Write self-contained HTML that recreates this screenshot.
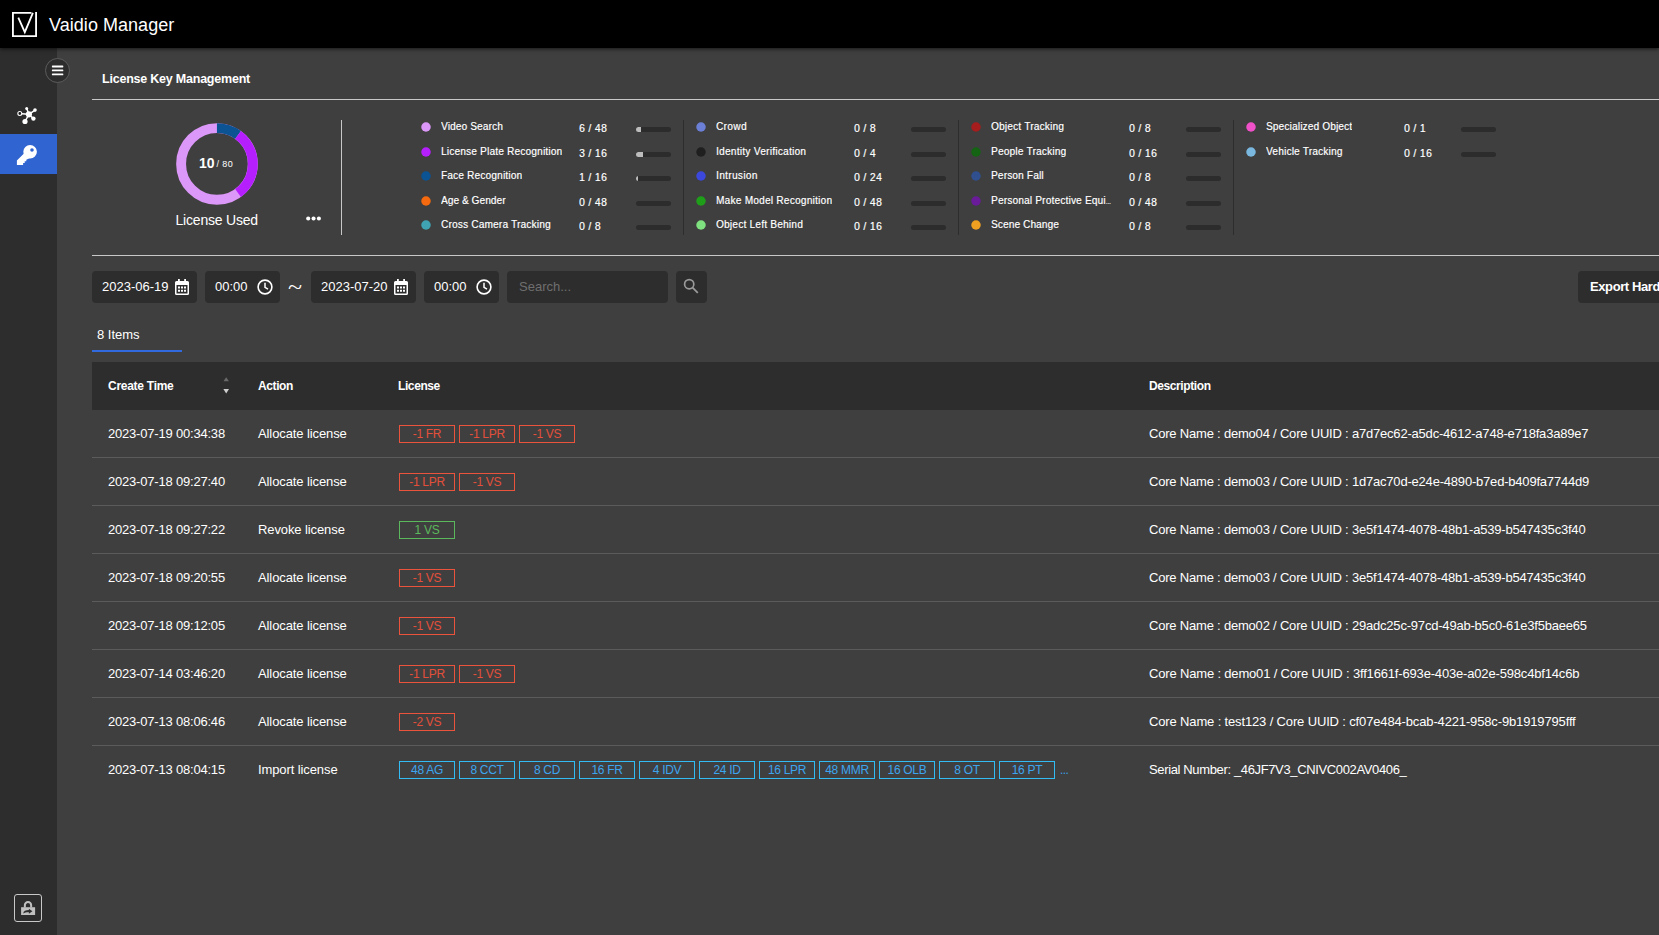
<!DOCTYPE html>
<html lang="en">
<head>
<meta charset="utf-8">
<title>Vaidio Manager</title>
<style>
*{box-sizing:border-box;margin:0;padding:0}
html,body{width:1659px;height:935px;overflow:hidden;background:#3f3f3f;color:#fff;font-family:"Liberation Sans",sans-serif;}
body{position:relative}
.abs{position:absolute}
#topbar{position:absolute;left:0;top:0;width:1659px;height:48px;background:#000;z-index:5;box-shadow:0 1px 4px rgba(0,0,0,.65)}
#logo{position:absolute;left:12px;top:12px;width:25px;height:25px}
#title{position:absolute;left:49px;top:14px;font-size:18px;line-height:22px;white-space:nowrap;letter-spacing:0.04px}
#sidebar{position:absolute;left:0;top:48px;width:57px;height:887px;background:#2d2d2d}
#burger{position:absolute;left:45px;top:58px;width:25px;height:25px;border-radius:50%;background:#2d2d2d;border:1px solid #5c5c5c;z-index:6}
#burger i{position:absolute;left:6px;width:11px;height:2px;background:#fff;border-radius:1px}
#nav-active{position:absolute;left:0;top:134px;width:57px;height:40px;background:#3064d0}
#lockbtn{position:absolute;left:14px;top:894px;width:28px;height:28px;border:1px solid #c8c8c8;border-radius:3px}
h1{position:absolute;left:102px;top:71px;font-size:12.5px;line-height:16px;font-weight:bold;white-space:nowrap;letter-spacing:-0.22px}
.hr{position:absolute;left:92px;width:1567px;height:1px;background:#c8c8c8}
.vr{position:absolute;width:1px;top:120px;height:115px;background:#8a8a8a}
#used{position:absolute;left:175.500px;top:211px;font-size:14px;line-height:18px;white-space:nowrap;letter-spacing:-0.2px}
.lg{position:absolute;width:275px;height:24px;white-space:nowrap}
.lg .d{position:absolute;left:-5px;top:7px;width:10px;height:10px;border-radius:50%;transform:scale(.95)}
.lg .n{position:absolute;left:15px;top:5px;font-size:10px;line-height:13px;letter-spacing:0.17px;max-width:123px;overflow:hidden;text-overflow:ellipsis;text-shadow:0.5px 0 0 rgba(255,255,255,.45)}
.lg .c{position:absolute;left:153px;top:7px;font-size:10.4px;line-height:13px;letter-spacing:0.35px;text-shadow:0.5px 0 0 rgba(255,255,255,.45)}
.lg .b{position:absolute;left:210px;top:12px;width:35px;height:5px;border-radius:2.5px;background:#2c2c2c;overflow:hidden}
.lg .b u{display:block;height:5px;background:#bdbdbd}
.inp{position:absolute;top:271px;height:32px;background:#2d2d2d;border-radius:4px;font-size:13px;line-height:32px;padding-left:10px;white-space:nowrap}
.inp svg{position:absolute}
#export{position:absolute;left:1578px;top:271px;width:100px;height:32px;background:#2d2d2d;border-radius:4px;font-size:13px;font-weight:bold;line-height:32px;padding-left:12px;white-space:nowrap;letter-spacing:-0.4px}
#items{position:absolute;left:97px;top:327px;font-size:13px;line-height:16px}
#tabline{position:absolute;left:92px;top:350px;width:90px;height:2px;background:#3169de}
table{position:absolute;left:92px;top:362px;width:1567px;border-collapse:separate;border-spacing:0;table-layout:fixed;font-size:13px;letter-spacing:-0.2px}
th:first-child{letter-spacing:-0.27px}
th{position:relative;height:48px;background:#2d2d2d;text-align:left;font-size:12px;font-weight:bold;padding-left:16px;white-space:nowrap;letter-spacing:-0.4px}
td{height:48px;padding-left:16px;white-space:nowrap;border-bottom:1px solid #5b5b5b;vertical-align:middle;overflow:hidden}
tr.last td{border-bottom-color:transparent}
td:nth-child(2){letter-spacing:-0.1px}
.t{display:inline-block;width:56px;height:18px;border:1px solid;font-size:12px;line-height:16px;text-align:center;margin-right:4px;vertical-align:middle;letter-spacing:-0.3px}
td.tags{padding-left:17px;font-size:0}
.more{font-size:12px;color:#3a9fe6;vertical-align:middle;letter-spacing:-0.6px;margin-left:1px}
.r{color:#e34f3b;border-color:#ec533d}
.g{color:#5cb85c;border-color:#5cb85c}
.bl{color:#3da5ee;border-color:#33bbf3}
</style>
</head>
<body>
<div id="topbar">
  <svg id="logo" viewBox="0 0 25 25" fill="none" stroke="#fff"><path d="M19.500 0.900H0.900V24.100H24.100V0" stroke-width="1.900"/><path d="M6.300 5.600L12.800 20.200L20.900 0.800" stroke-width="1.800"/></svg>
  <div id="title">Vaidio Manager</div>
</div>
<div id="sidebar"></div>
<div id="burger"><svg class="abs" style="left:-1px;top:-1px" width="25" height="25" viewBox="45 58 25 25" fill="#fff"><rect x="51.900" y="65.500" width="11.400" height="1.900" rx="0.600"/><rect x="51.900" y="69.450" width="11.400" height="1.900" rx="0.600"/><rect x="51.900" y="73.400" width="11.400" height="1.900" rx="0.600"/></svg></div>
<div id="nav-active"></div>
<svg class="abs" style="left:0;top:100px" width="57" height="74" viewBox="0 100 57 74" fill="#fff" stroke="#fff">
<g stroke-width="1.5" fill="none"><path d="M28.9 114.3L21.8 113.7M28.9 114.3L26.7 108.4M28.9 114.3L35 110.1M28.9 114.3L33.4 118.6M28.9 114.3L25 121.5"/></g>
<g stroke="none"><circle cx="28.9" cy="114.3" r="3.1"/><circle cx="26.7" cy="108.4" r="1.5"/><circle cx="35" cy="110.1" r="1.8"/><circle cx="33.4" cy="118.6" r="2.2"/><circle cx="25" cy="121.5" r="2.6"/></g>
<circle cx="19.800" cy="113.500" r="1.950" fill="#1c1c1c" stroke-width="1.100"/>
<g stroke="none"><path fill-rule="evenodd" d="M30.100 144.900a6.800 6.750 0 1 0 0 13.500a6.800 6.750 0 0 0 0-13.500zm1.900 3.300a1.800 1.800 0 1 1 0 3.600a1.800 1.800 0 0 1 0-3.600z"/><path d="M24.200 153.200L16.900 160.500V164.900H23.100V162.900H24.700V161.200H26.300V159.700L30 158L27 152z"/></g>
</svg>
<div id="lockbtn"><svg class="abs" style="left:6px;top:6px" width="15" height="15" viewBox="0.400 0.600 15 15"><path d="M4.250 7.200V4.750a3.150 3.150 0 0 1 6.300 0V7.200" fill="none" stroke="#c0c0c0" stroke-width="2"/><rect x="0.500" y="6.800" width="14" height="7.800" fill="#c0c0c0"/><path d="M2.600 13c0.300-2.200 2.600-3.300 5.700-3.300V8.300l3.500 2.500l-3.500 2.500v-1.500c-2.200-0.100-4.100 0.200-5.700 1.200z" fill="#2d2d2d"/></svg></div>

<h1>License Key Management</h1>
<div class="hr" style="top:99px"></div>
<div class="hr" style="top:255px"></div>

<svg class="abs" style="left:176px;top:122px" width="83" height="83" viewBox="-40.950 -41.950 83 83" fill="none" stroke-width="9.900">
  <circle r="35.850" stroke="#dc98f8"/>
  <path d="M0 -35.850A35.850 35.850 0 0 1 21.070 -29" stroke="#0c5394"/>
  <path d="M21.070 -29A35.850 35.850 0 0 1 21.070 29" stroke="#b61ffd"/>
</svg>
<div class="abs" style="left:199px;top:154px;font-size:14px;font-weight:bold;line-height:18px;white-space:nowrap">10</div>
<div class="abs" style="left:216.500px;top:158px;font-size:9px;line-height:12px;white-space:nowrap;letter-spacing:0.400px">/ 80</div>
<div id="used">License Used</div>
<svg class="abs" style="left:304px;top:214px" width="20" height="9" viewBox="304 214 20 9" fill="#fff"><circle cx="308.200" cy="218.450" r="2.050"/><circle cx="313.550" cy="218.450" r="2.050"/><circle cx="318.900" cy="218.450" r="2.050"/></svg>
<div class="vr" style="left:341px;background:#c8c8c8"></div>
<div class="vr" style="left:683px;background:#2d2d2d"></div>
<div class="vr" style="left:958px;background:#2d2d2d"></div>
<div class="vr" style="left:1233px;background:#2d2d2d"></div>

<!--LEGEND-->
<div class="lg" style="left:426px;top:115px"><span class="d" style="background:#dc98f8"></span><span class="n">Video Search</span><span class="c">6 / 48</span><span class="b"><u style="width:4.50px"></u></span></div>
<div class="lg" style="left:426px;top:140px"><span class="d" style="background:#b61ffd"></span><span class="n" style="letter-spacing:0.23px">License Plate Recognition</span><span class="c">3 / 16</span><span class="b"><u style="width:6.75px"></u></span></div>
<div class="lg" style="left:426px;top:164px"><span class="d" style="background:#0c5394"></span><span class="n" style="letter-spacing:0.22px">Face Recognition</span><span class="c">1 / 16</span><span class="b"><u style="width:2.25px"></u></span></div>
<div class="lg" style="left:426px;top:189px"><span class="d" style="background:#f56a0e"></span><span class="n" style="letter-spacing:0.10px">Age &amp; Gender</span><span class="c">0 / 48</span><span class="b"></span></div>
<div class="lg" style="left:426px;top:213px"><span class="d" style="background:#3fa3b3"></span><span class="n" style="letter-spacing:0.23px">Cross Camera Tracking</span><span class="c">0 / 8</span><span class="b"></span></div>
<div class="lg" style="left:701px;top:115px"><span class="d" style="background:#6b7fd6"></span><span class="n" style="letter-spacing:0.39px">Crowd</span><span class="c">0 / 8</span><span class="b"></span></div>
<div class="lg" style="left:701px;top:140px"><span class="d" style="background:#1f1f1f"></span><span class="n" style="letter-spacing:0.30px">Identity Verification</span><span class="c">0 / 4</span><span class="b"></span></div>
<div class="lg" style="left:701px;top:164px"><span class="d" style="background:#3c48dc"></span><span class="n" style="letter-spacing:0.37px">Intrusion</span><span class="c">0 / 24</span><span class="b"></span></div>
<div class="lg" style="left:701px;top:189px"><span class="d" style="background:#1f9e1a"></span><span class="n" style="letter-spacing:0.28px">Make Model Recognition</span><span class="c">0 / 48</span><span class="b"></span></div>
<div class="lg" style="left:701px;top:213px"><span class="d" style="background:#7fe07f"></span><span class="n" style="letter-spacing:0.26px">Object Left Behind</span><span class="c">0 / 16</span><span class="b"></span></div>
<div class="lg" style="left:976px;top:115px"><span class="d" style="background:#a51d1d"></span><span class="n" style="letter-spacing:0.24px">Object Tracking</span><span class="c">0 / 8</span><span class="b"></span></div>
<div class="lg" style="left:976px;top:140px"><span class="d" style="background:#146414"></span><span class="n" style="letter-spacing:0.24px">People Tracking</span><span class="c">0 / 16</span><span class="b"></span></div>
<div class="lg" style="left:976px;top:164px"><span class="d" style="background:#2f4f8f"></span><span class="n" style="letter-spacing:0.20px">Person Fall</span><span class="c">0 / 8</span><span class="b"></span></div>
<div class="lg" style="left:976px;top:189px"><span class="d" style="background:#6a1b9a"></span><span class="n" style="letter-spacing:.22px">Personal Protective Equi<span style="font-size:7px;letter-spacing:-0.3px">...</span></span><span class="c">0 / 48</span><span class="b"></span></div>
<div class="lg" style="left:976px;top:213px"><span class="d" style="background:#f0a020"></span><span class="n" style="letter-spacing:0.15px">Scene Change</span><span class="c">0 / 8</span><span class="b"></span></div>
<div class="lg" style="left:1251px;top:115px"><span class="d" style="background:#f050c8"></span><span class="n" style="letter-spacing:0.19px">Specialized Object</span><span class="c">0 / 1</span><span class="b"></span></div>
<div class="lg" style="left:1251px;top:140px"><span class="d" style="background:#7ab8e0"></span><span class="n" style="letter-spacing:0.24px">Vehicle Tracking</span><span class="c">0 / 16</span><span class="b"></span></div>
<!--/LEGEND-->

<!--FILTER-->
<div class="inp" style="left:92px;width:105px">2023-06-19<svg style="left:83px;top:8px" width="14" height="16" viewBox="0 0 14 16" fill="#fff"><path d="M3 0h1.8v2H9.2V0H11v2h1.5A1.5 1.5 0 0 1 14 3.5v11a1.5 1.5 0 0 1-1.5 1.5h-11A1.5 1.5 0 0 1 0 14.500v-11A1.5 1.500 0 0 1 1.500 2H3zM1.500 6v8.500h11V6z" fill-rule="evenodd"/><path d="M3 7.500h2v2H3zM6 7.500h2v2H6zM9 7.500h2v2H9zM3 10.800h2v2H3zM6 10.800h2v2H6zM9 10.800h2v2H9z"/></svg></div>
<div class="inp" style="left:205px;width:75px">00:00<svg style="left:52px;top:8px" width="16" height="16" viewBox="0 0 16 16" fill="none" stroke="#fff" stroke-width="1.600"><circle cx="8" cy="8" r="6.900"/><path d="M8 3.800V8.300L11 10.200" stroke-width="1.500"/></svg></div>
<div class="abs" style="left:288px;top:273px;font-family:'Liberation Serif',serif;font-size:26px;line-height:30px;transform:scaleY(.780)">~</div>
<div class="inp" style="left:311px;width:105px">2023-07-20<svg style="left:83px;top:8px" width="14" height="16" viewBox="0 0 14 16" fill="#fff"><path d="M3 0h1.8v2H9.2V0H11v2h1.5A1.5 1.5 0 0 1 14 3.5v11a1.5 1.5 0 0 1-1.5 1.5h-11A1.5 1.5 0 0 1 0 14.500v-11A1.5 1.500 0 0 1 1.500 2H3zM1.500 6v8.500h11V6z" fill-rule="evenodd"/><path d="M3 7.500h2v2H3zM6 7.500h2v2H6zM9 7.500h2v2H9zM3 10.800h2v2H3zM6 10.800h2v2H6zM9 10.800h2v2H9z"/></svg></div>
<div class="inp" style="left:424px;width:75px">00:00<svg style="left:52px;top:8px" width="16" height="16" viewBox="0 0 16 16" fill="none" stroke="#fff" stroke-width="1.600"><circle cx="8" cy="8" r="6.900"/><path d="M8 3.800V8.300L11 10.200" stroke-width="1.500"/></svg></div>
<div class="inp" style="left:507px;width:161px;padding-left:12px;color:#6f6f6f">Search...</div>
<div class="inp" style="left:676px;width:31px;padding:0"><svg style="left:7px;top:7px" width="16" height="16" viewBox="0 0 16 16" fill="none" stroke="#9a9a9a" stroke-width="1.700"><circle cx="6.200" cy="6.200" r="4.600"/><path d="M9.600 9.600L14.800 14.800" stroke-width="1.800"/></svg></div>
<div id="export">Export Hardware Info</div>
<!--/FILTER-->

<div id="items">8 Items</div>
<div id="tabline"></div>

<!--TABLE-->
<table><colgroup><col style="width:150px"><col style="width:140px"><col style="width:751px"><col></colgroup>
<thead><tr><th>Create Time<svg style="position:absolute;left:131px;top:15px" width="8" height="20" viewBox="0 0 8 20"><path d="M3.200 0.300L5.900 4.200H0.500z" fill="#6a6a6a"/><path d="M3.200 16.600L6 12H0.400z" fill="#cfcfcf"/></svg></th><th>Action</th><th>License</th><th>Description</th></tr></thead><tbody>
<tr><td>2023-07-19 00:34:38</td><td>Allocate license</td><td class="tags"><span class="t r">-1 FR</span><span class="t r">-1 LPR</span><span class="t r">-1 VS</span></td><td>Core Name : demo04 / Core UUID : a7d7ec62-a5dc-4612-a748-e718fa3a89e7</td></tr>
<tr><td>2023-07-18 09:27:40</td><td>Allocate license</td><td class="tags"><span class="t r">-1 LPR</span><span class="t r">-1 VS</span></td><td>Core Name : demo03 / Core UUID : 1d7ac70d-e24e-4890-b7ed-b409fa7744d9</td></tr>
<tr><td>2023-07-18 09:27:22</td><td>Revoke license</td><td class="tags"><span class="t g">1 VS</span></td><td>Core Name : demo03 / Core UUID : 3e5f1474-4078-48b1-a539-b547435c3f40</td></tr>
<tr><td>2023-07-18 09:20:55</td><td>Allocate license</td><td class="tags"><span class="t r">-1 VS</span></td><td>Core Name : demo03 / Core UUID : 3e5f1474-4078-48b1-a539-b547435c3f40</td></tr>
<tr><td>2023-07-18 09:12:05</td><td>Allocate license</td><td class="tags"><span class="t r">-1 VS</span></td><td>Core Name : demo02 / Core UUID : 29adc25c-97cd-49ab-b5c0-61e3f5baee65</td></tr>
<tr><td>2023-07-14 03:46:20</td><td>Allocate license</td><td class="tags"><span class="t r">-1 LPR</span><span class="t r">-1 VS</span></td><td style="letter-spacing:-0.17px">Core Name : demo01 / Core UUID : 3ff1661f-693e-403e-a02e-598c4bf14c6b</td></tr>
<tr><td>2023-07-13 08:06:46</td><td>Allocate license</td><td class="tags"><span class="t r">-2 VS</span></td><td style="letter-spacing:-0.145px">Core Name : test123 / Core UUID : cf07e484-bcab-4221-958c-9b1919795fff</td></tr>
<tr class=last><td>2023-07-13 08:04:15</td><td>Import license</td><td class="tags"><span class="t bl">48 AG</span><span class="t bl">8 CCT</span><span class="t bl">8 CD</span><span class="t bl">16 FR</span><span class="t bl">4 IDV</span><span class="t bl">24 ID</span><span class="t bl">16 LPR</span><span class="t bl">48 MMR</span><span class="t bl">16 OLB</span><span class="t bl">8 OT</span><span class="t bl">16 PT</span><span class="more">...</span></td><td style="letter-spacing:-0.36px">Serial Number: _46JF7V3_CNIVC002AV0406_</td></tr>
</tbody></table>
<!--/TABLE-->
</body>
</html>
